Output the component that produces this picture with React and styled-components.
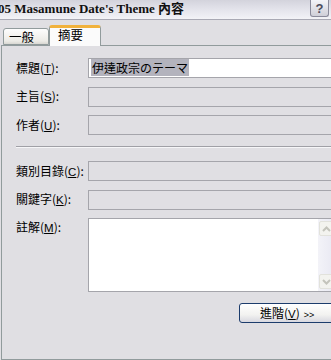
import React from "react";
import styled, { createGlobalStyle } from "styled-components";

const GlobalStyle = createGlobalStyle`
  html, body { margin: 0; padding: 0; overflow: hidden; background: #e0dfe3; }
  * { box-sizing: border-box; }
`;

const CJK = `"Noto Sans CJK TC", "Noto Sans CJK JP", sans-serif`;

const Window = styled.div`
  width: 331px;
  height: 360px;
  overflow: hidden;
  display: flex;
  flex-direction: column;
  background: #e0dfe3;
  font-family: "Liberation Sans", ${CJK};
  font-size: 12px;
  color: #000;
`;

const TitleBar = styled.div`
  height: 20px;
  flex: none;
  display: flex;
  align-items: flex-start;
  justify-content: space-between;
  background: linear-gradient(#d3d3dc 0%, #e2e2ea 45%, #f3f3f7 100%);
  border-bottom: 1px solid #a9a9b4;
`;

const Title = styled.div`
  margin-left: -2px;
  margin-top: 1px;
  font-family: "Liberation Serif", "Noto Sans CJK TC", serif;
  font-weight: bold;
  font-size: 13px;
  line-height: 16px;
  white-space: nowrap;
  color: #111;
`;

const HelpButton = styled.div`
  width: 19px;
  height: 17px;
  margin-right: 2px;
  border: 1px solid #8a8a9a;
  border-top: none;
  border-radius: 0 0 3px 3px;
  background: linear-gradient(#f4f4f8, #cfcfd8);
  display: flex;
  align-items: center;
  justify-content: center;
  font-family: "Liberation Sans", sans-serif;
  font-weight: bold;
  font-size: 13px;
  color: #4c4c5c;
`;

const Body = styled.div`
  flex: 1;
  display: flex;
  flex-direction: column;
  padding-top: 5px;
`;

const TabRow = styled.div`
  display: flex;
  align-items: flex-end;
  height: 20px;
  padding-left: 3px;
  position: relative;
  z-index: 1;
`;

const Tab = styled.div`
  height: ${(p) => (p.$active ? "21px" : "17px")};
  margin-bottom: ${(p) => (p.$active ? "-1px" : "0")};
  width: ${(p) => p.$w}px;
  padding-left: ${(p) => p.$pad}px;
  border: 1px solid #919b9c;
  border-bottom: ${(p) => (p.$active ? "none" : "1px solid #919b9c")};
  border-top: ${(p) => (p.$active ? "3px solid #f1b23c" : "1px solid #919b9c")};
  border-radius: 3px 3px 0 0;
  background: ${(p) =>
    p.$active ? "#fbfbfb" : "linear-gradient(#fdfdfd, #ecebe6 80%, #d8d7d2)"};
  font-family: ${CJK};
  font-size: 12.5px;
  line-height: ${(p) => (p.$active ? "14px" : "15px")};
  white-space: nowrap;
`;

const Panel = styled.div`
  flex: 1;
  margin-left: 1px;
  width: 360px;
  border: 1px solid #919b9c;
  border-right: none;
  padding: 12px 0 0 14px;
  background: #e0dfe3;
`;

const FormGrid = styled.div`
  display: grid;
  grid-template-columns: 72px 260px;
  grid-auto-rows: 20px;
  row-gap: 8.5px;
  align-items: center;
`;

const Label = styled.div`
  font-family: ${CJK};
  font-size: 12px;
  line-height: 14px;
  white-space: nowrap;
`;

const Key = styled.span`
  text-decoration: underline;
  font-family: "Liberation Sans", sans-serif;
  font-size: 11.5px;
`;

const Field = styled.div`
  height: 20px;
  border: 1px solid #a5a5ab;
  background: ${(p) => (p.$enabled ? "#ffffff" : "#e0dfe3")};
  padding: 1px 0 0 2px;
  font-family: ${CJK};
  font-size: 12px;
  line-height: 16px;
`;

const Selected = styled.span`
  background: #b3b3bd;
  padding: 0 1px;
`;

const Separator = styled.div`
  margin: 11px 0 13px 0;
  height: 2px;
  border-top: 1px solid #a0a0a6;
  border-bottom: 1px solid #f6f6f8;
`;

const NotesRow = styled.div`
  display: grid;
  grid-template-columns: 72px 260px;
  margin-top: 8.5px;
`;

const NotesLabel = styled(Label)`
  padding-top: 2px;
`;

const TextArea = styled.div`
  height: 74px;
  border: 1px solid #a5a5ab;
  background: #fff;
  display: flex;
  justify-content: flex-start;
  padding-left: 229px;
`;

const ScrollBar = styled.div`
  width: 17px;
  height: 100%;
  background: linear-gradient(90deg, #f3f3f8, #e8e8f2);
  display: flex;
  flex-direction: column;
  justify-content: space-between;
  padding: 2px 0;
`;

const ScrollBtn = styled.div`
  width: 15px;
  height: 15px;
  margin-left: 1px;
  border: 1px solid #e2e2dc;
  border-radius: 2px;
  background: #f3f3ef;
  display: flex;
  align-items: center;
  justify-content: center;
`;

const ButtonRow = styled.div`
  padding-left: 223px;
  margin-top: 11px;
`;

const Button = styled.div`
  width: 110px;
  height: 20px;
  border: 1px solid #1c3c6c;
  border-radius: 3px;
  background: linear-gradient(#ffffff, #f2f2f0 60%, #d8d8e0);
  padding-left: 20px;
  font-family: ${CJK};
  font-size: 12px;
  line-height: 17px;
  white-space: nowrap;
`;

const Arrows = styled.span`
  font-family: "Liberation Sans", sans-serif;
  font-size: 9px;
  margin-left: 4px;
`;

const Chevron = ({ up }) => (
  <svg width="9" height="6" viewBox="0 0 9 6">
    <path
      d={up ? "M1 5 L4.5 1.5 L8 5" : "M1 1 L4.5 4.5 L8 1"}
      fill="none"
      stroke="#c4c4bc"
      strokeWidth="2"
    />
  </svg>
);

export default function App() {
  return (
    <>
      <GlobalStyle />
      <Window>
        <TitleBar>
          <Title>05 Masamune Date's Theme 內容</Title>
          <HelpButton>?</HelpButton>
        </TitleBar>
        <Body>
          <TabRow>
            <Tab $w={46} $pad={5}>一般</Tab>
            <Tab $active $w={52} $pad={8}>摘要</Tab>
          </TabRow>
          <Panel>
            <FormGrid>
              <Label>標題(<Key>T</Key>):</Label>
              <Field $enabled>
                <Selected>伊達政宗のテーマ</Selected>
              </Field>
              <Label>主旨(<Key>S</Key>):</Label>
              <Field />
              <Label>作者(<Key>U</Key>):</Label>
              <Field />
            </FormGrid>
            <Separator />
            <FormGrid>
              <Label>類別目錄(<Key>C</Key>):</Label>
              <Field />
              <Label>關鍵字(<Key>K</Key>):</Label>
              <Field />
            </FormGrid>
            <NotesRow>
              <NotesLabel>註解(<Key>M</Key>):</NotesLabel>
              <TextArea>
                <ScrollBar>
                  <ScrollBtn><Chevron up /></ScrollBtn>
                  <ScrollBtn><Chevron /></ScrollBtn>
                </ScrollBar>
              </TextArea>
            </NotesRow>
            <ButtonRow>
              <Button>
                進階(<Key>V</Key>)<Arrows>&gt;&gt;</Arrows>
              </Button>
            </ButtonRow>
          </Panel>
        </Body>
      </Window>
    </>
  );
}
